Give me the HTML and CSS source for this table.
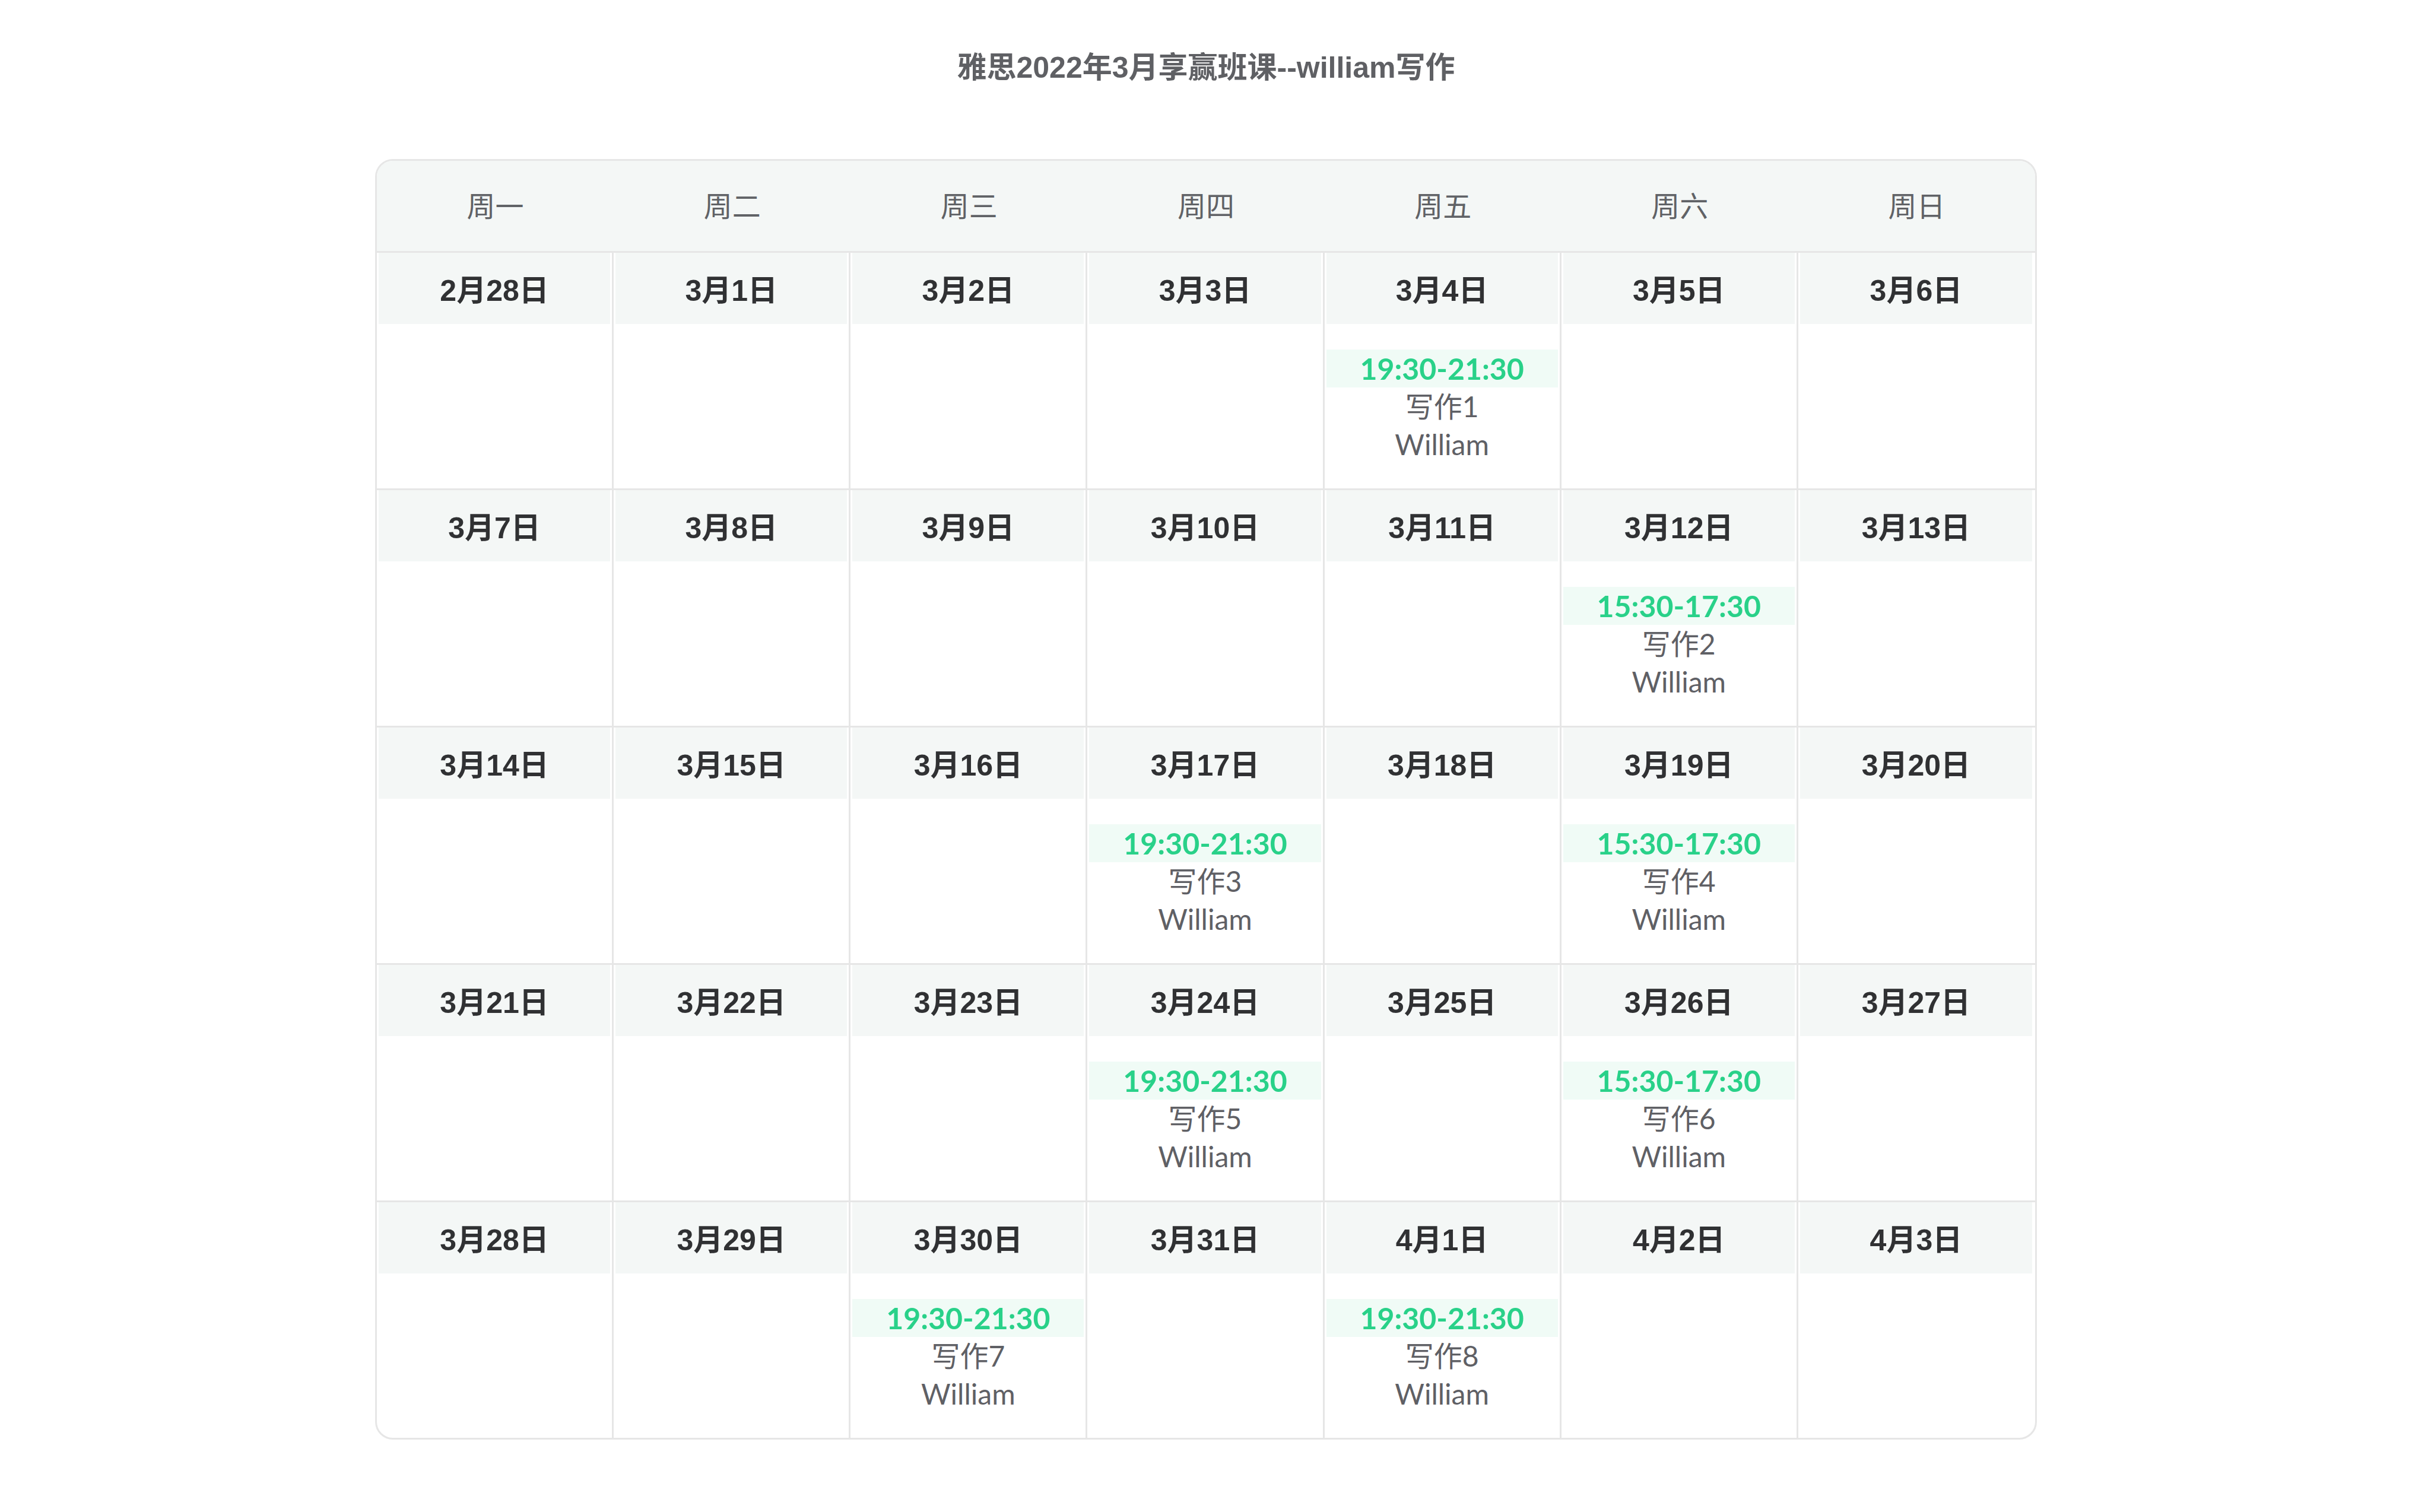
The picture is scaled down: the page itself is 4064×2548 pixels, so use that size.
FILE: index.html
```html
<!DOCTYPE html>
<html lang="zh-CN">
<head>
<meta charset="utf-8">
<title>雅思2022年3月享赢班课--william写作</title>
<link rel="stylesheet" href="styles.css">
</head>
<body>
<h1 class="title">雅思2022年3月享赢班课--william写作</h1>
<div class="calendar">
  <div class="week-head">
    <div class="wd">周一</div><div class="wd">周二</div><div class="wd">周三</div><div class="wd">周四</div><div class="wd">周五</div><div class="wd">周六</div><div class="wd">周日</div>
  </div>
  <div class="days">
    <div class="cell"><div class="date">2月28日</div><div class="body"></div></div>
    <div class="cell"><div class="date">3月1日</div><div class="body"></div></div>
    <div class="cell"><div class="date">3月2日</div><div class="body"></div></div>
    <div class="cell"><div class="date">3月3日</div><div class="body"></div></div>
    <div class="cell"><div class="date">3月4日</div><div class="body"><div class="time">19:30-21:30</div><div class="line">写作1</div><div class="line">William</div></div></div>
    <div class="cell"><div class="date">3月5日</div><div class="body"></div></div>
    <div class="cell"><div class="date">3月6日</div><div class="body"></div></div>

    <div class="cell"><div class="date">3月7日</div><div class="body"></div></div>
    <div class="cell"><div class="date">3月8日</div><div class="body"></div></div>
    <div class="cell"><div class="date">3月9日</div><div class="body"></div></div>
    <div class="cell"><div class="date">3月10日</div><div class="body"></div></div>
    <div class="cell"><div class="date">3月11日</div><div class="body"></div></div>
    <div class="cell"><div class="date">3月12日</div><div class="body"><div class="time">15:30-17:30</div><div class="line">写作2</div><div class="line">William</div></div></div>
    <div class="cell"><div class="date">3月13日</div><div class="body"></div></div>

    <div class="cell"><div class="date">3月14日</div><div class="body"></div></div>
    <div class="cell"><div class="date">3月15日</div><div class="body"></div></div>
    <div class="cell"><div class="date">3月16日</div><div class="body"></div></div>
    <div class="cell"><div class="date">3月17日</div><div class="body"><div class="time">19:30-21:30</div><div class="line">写作3</div><div class="line">William</div></div></div>
    <div class="cell"><div class="date">3月18日</div><div class="body"></div></div>
    <div class="cell"><div class="date">3月19日</div><div class="body"><div class="time">15:30-17:30</div><div class="line">写作4</div><div class="line">William</div></div></div>
    <div class="cell"><div class="date">3月20日</div><div class="body"></div></div>

    <div class="cell"><div class="date">3月21日</div><div class="body"></div></div>
    <div class="cell"><div class="date">3月22日</div><div class="body"></div></div>
    <div class="cell"><div class="date">3月23日</div><div class="body"></div></div>
    <div class="cell"><div class="date">3月24日</div><div class="body"><div class="time">19:30-21:30</div><div class="line">写作5</div><div class="line">William</div></div></div>
    <div class="cell"><div class="date">3月25日</div><div class="body"></div></div>
    <div class="cell"><div class="date">3月26日</div><div class="body"><div class="time">15:30-17:30</div><div class="line">写作6</div><div class="line">William</div></div></div>
    <div class="cell"><div class="date">3月27日</div><div class="body"></div></div>

    <div class="cell"><div class="date">3月28日</div><div class="body"></div></div>
    <div class="cell"><div class="date">3月29日</div><div class="body"></div></div>
    <div class="cell"><div class="date">3月30日</div><div class="body"><div class="time">19:30-21:30</div><div class="line">写作7</div><div class="line">William</div></div></div>
    <div class="cell"><div class="date">3月31日</div><div class="body"></div></div>
    <div class="cell"><div class="date">4月1日</div><div class="body"><div class="time">19:30-21:30</div><div class="line">写作8</div><div class="line">William</div></div></div>
    <div class="cell"><div class="date">4月2日</div><div class="body"></div></div>
    <div class="cell"><div class="date">4月3日</div><div class="body"></div></div>
  </div>
</div>
</body>
</html>
```

FILE: styles.css
```css
html, body {
  margin: 0;
  padding: 0;
  background: #ffffff;
}

body {
  font-family: "Lato", "Noto Sans CJK SC", sans-serif;
  color: #606266;
}

.title {
  margin: 0;
  padding-top: 82px;
  height: 64px;
  line-height: 64px;
  text-align: center;
  font-family: "Liberation Sans", "Noto Sans CJK SC", sans-serif;
  font-size: 50px;
  font-weight: 700;
  color: #5f6064;
}

.calendar {
  box-sizing: border-box;
  width: 2800px;
  margin: 122px auto 0;
  border: 3px solid #e6e6e6;
  border-radius: 30px;
  overflow: hidden;
}

.week-head {
  display: grid;
  grid-template-columns: repeat(7, 1fr);
  height: 152px;
  background: #f4f7f6;
  border-bottom: 3px solid #e6e6e6;
}

.wd {
  display: flex;
  align-items: center;
  justify-content: center;
  padding-bottom: 6px;
  font-family: "Noto Sans CJK SC", sans-serif;
  font-size: 48px;
  color: #606266;
}

.days {
  display: grid;
  grid-template-columns: repeat(7, 1fr);
}

.cell {
  box-sizing: border-box;
  height: 400px;
  padding: 0 3px;
  border-right: 3px solid #e6e6e6;
  border-bottom: 3px solid #e6e6e6;
  display: flex;
  flex-direction: column;
}

.cell:nth-child(7n) {
  border-right: 0;
  padding-right: 5px;
}

.cell:nth-last-child(-n+7) {
  border-bottom: 0;
  height: 397px;
}

.date {
  height: 120px;
  flex: 0 0 120px;
  display: flex;
  align-items: center;
  justify-content: center;
  padding-bottom: 2px;
  box-sizing: border-box;
  background: #f4f7f6;
  font-family: "Liberation Sans", "Noto Sans CJK SC", sans-serif;
  font-size: 50px;
  font-weight: 700;
  color: #303133;
}

.body {
  flex: 1;
  display: flex;
  flex-direction: column;
  justify-content: center;
}

.time {
  height: 64px;
  line-height: 64px;
  text-align: center;
  background: #f0fbf6;
  color: #29d189;
  font-family: "Lato", "Noto Sans CJK SC", sans-serif;
  font-size: 50px;
  font-weight: 700;
}

.line {
  height: 64px;
  line-height: 64px;
  text-align: center;
  font-family: "Lato", "Noto Sans CJK SC", sans-serif;
  font-size: 48px;
  color: #5f6065;
}
```
